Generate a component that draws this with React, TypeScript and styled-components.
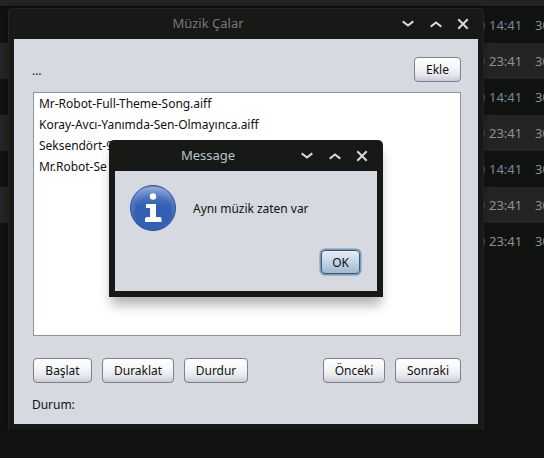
import React from "react";
import styled, { createGlobalStyle } from "styled-components";

const Global = createGlobalStyle`
  html, body { margin: 0; padding: 0; background: #111311; overflow: hidden; }
  #root { width: 544px; height: 458px; }
`;

const Desktop = styled.div`
  position: relative;
  width: 544px;
  height: 458px;
  overflow: hidden;
  background: #111311;
  font-family: "Noto Sans", "Open Sans", sans-serif;
  font-size: 12px;
  letter-spacing: -0.03px;
`;

const TopStrip = styled.div`
  height: 7px;
  background: #242424;
  border-bottom: 1px solid #0c0d0c;
  box-sizing: border-box;
`;

const Row = styled.div<{ $alt: boolean }>`
  height: 36px;
  background: ${(p) => (p.$alt ? "#242424" : "#111311")};
  display: flex;
  align-items: center;
  padding-left: 482px;
  box-sizing: border-box;
  gap: 4px;
  white-space: nowrap;
`;

const Dot = styled.span`
  width: 3px;
  height: 9px;
  border-radius: 0 5px 5px 0;
  background: #7a4a1c;
  flex: none;
`;

const Time = styled.span<{ $tone: string }>`
  color: ${(p) => p.$tone};
  font-size: 13px;
  letter-spacing: 0;
  width: 31px;
  flex: none;
`;

const Extra = styled.span`
  color: #8f9092;
  font-size: 13px;
  margin-left: 11px;
`;

const Frame = styled.div`
  position: absolute;
  left: 8px;
  top: 8px;
  width: 476px;
  height: 422px;
  box-sizing: border-box;
  background: #171917;
  border: 1px solid #232523;
  border-bottom: none;
  border-radius: 4px 4px 0 0;
  padding: 0 5px 6px;
  display: flex;
  flex-direction: column;
  box-shadow: 0 0 6px rgba(0, 0, 0, 0.35);
`;

const TitleBar = styled.div<{ $h: number }>`
  height: ${(p) => p.$h}px;
  flex: none;
  display: flex;
  align-items: center;
  margin: 0 -5px;
`;

const TitleText = styled.div<{ $color: string }>`
  flex: 1;
  text-align: center;
  color: ${(p) => p.$color};
  font-size: 13px;
  letter-spacing: 0;
  padding: 0 0 2px 7px;
`;

const Controls = styled.div`
  flex: none;
  display: flex;
  gap: 11.5px;
  padding-right: 12px;
`;

const ControlIcon = styled.svg`
  width: 16px;
  height: 16px;
  flex: none;
  fill: none;
  stroke: #d8dadb;
  stroke-width: 2;
  stroke-linecap: square;
  stroke-linejoin: miter;
`;

const Panel = styled.div`
  flex: 1;
  background: #d6d9df;
  padding: 18px 17px 0 19px;
  display: flex;
  flex-direction: column;
  color: #111;
  min-height: 0;
`;

const TopLine = styled.div`
  display: flex;
  justify-content: space-between;
  align-items: flex-end;
  height: 25px;
`;

const Dots = styled.span`
  margin-left: -1px;
  line-height: 16px;
  position: relative;
  top: -3px;
`;

const Btn = styled.button<{ $w: number }>`
  width: ${(p) => p.$w}px;
  height: 25px;
  box-sizing: border-box;
  padding: 0;
  font: inherit;
  letter-spacing: inherit;
  color: #111;
  border: 1px solid #7c8088;
  border-radius: 4px;
  background: linear-gradient(#ffffff 0%, #f4f5f8 45%, #e3e6ec 75%, #c6cad2 100%);
  flex: none;
`;

const List = styled.div`
  margin-top: 10px;
  height: 244px;
  box-sizing: border-box;
  background: #fff;
  border: 1px solid #8f939c;
  padding: 0 5px;
  display: flex;
  flex-direction: column;
  flex: none;
`;

const ListItem = styled.div`
  height: 21px;
  line-height: 21px;
  color: #111;
  white-space: nowrap;
`;

const ButtonRow = styled.div`
  margin-top: 22px;
  display: flex;
  gap: 10px;
`;

const Spacer = styled.div`
  flex: 1;
`;

const Status = styled.div`
  margin: 13px 0 0 -1px;
  line-height: 18px;
`;

const Dialog = styled.div`
  position: absolute;
  left: 109px;
  top: 140px;
  width: 274px;
  height: 157px;
  box-sizing: border-box;
  background: #171917;
  border-radius: 5px 5px 0 0;
  padding: 0 6px 6px;
  display: flex;
  flex-direction: column;
  box-shadow: 0 10px 12px -2px rgba(0, 0, 0, 0.3);
`;

const DialogBody = styled.div`
  flex: 1;
  background: #d6d9df;
  display: flex;
  flex-direction: column;
  padding: 14px 17px 0 15px;
`;

const MessageRow = styled.div`
  display: flex;
  align-items: center;
  gap: 17px;
  height: 46px;
  color: #111;
`;

const DialogActions = styled.div`
  margin-top: 19px;
  display: flex;
  justify-content: flex-end;
`;

const OkBtn = styled.button`
  width: 39px;
  height: 24px;
  box-sizing: border-box;
  padding: 0;
  font: inherit;
  letter-spacing: inherit;
  color: #111;
  border: 1px solid #4b5563;
  border-radius: 4px;
  background: linear-gradient(#e6edf4 0%, #c4d5e6 50%, #9fb9d2 100%);
  box-shadow: 0 0 0 1.5px #6f9ac4;
`;

const Chevron = ({ up }: { up?: boolean }) => (
  <ControlIcon viewBox="0 0 16 16">
    <path d={up ? "M3.5 10 L8 6.5 L12.5 10" : "M3.5 6 L8 9.5 L12.5 6"} />
  </ControlIcon>
);
const Close = () => (
  <ControlIcon viewBox="0 0 16 16">
    <path d="M4 4 L12 12 M12 4 L4 12" />
  </ControlIcon>
);

const InfoIcon = () => (
  <svg width="46" height="46" viewBox="0 0 46 46">
    <defs>
      <radialGradient id="ball" cx="50%" cy="62%" r="60%">
        <stop offset="0%" stopColor="#2f5db5" />
        <stop offset="65%" stopColor="#3560b4" />
        <stop offset="100%" stopColor="#6d90cf" />
      </radialGradient>
      <linearGradient id="shine" x1="0" y1="0" x2="0" y2="1">
        <stop offset="0%" stopColor="#9db7e2" stopOpacity="0.8" />
        <stop offset="100%" stopColor="#3d68ba" stopOpacity="0" />
      </linearGradient>
    </defs>
    <circle cx="23" cy="23" r="22.5" fill="url(#ball)" stroke="#2b4d94" strokeWidth="1" />
    <ellipse cx="23" cy="13" rx="18" ry="11" fill="url(#shine)" />
    <circle cx="23" cy="11.5" r="3.2" fill="#fff" />
    <path d="M16 19 H26 V32 H30 Q31.5 32 31.5 34 V37 H15 V34 Q15 32 17 32 H20 V23 H16 Z" fill="#fff" />
  </svg>
);

const rows = [
  { t: "14:41", tone: "#76899b" },
  { t: "23:41", tone: "#8f9092" },
  { t: "14:41", tone: "#76899b" },
  { t: "23:41", tone: "#8f9092" },
  { t: "14:41", tone: "#76899b" },
  { t: "23:41", tone: "#8f9092" },
  { t: "23:41", tone: "#8f9092" },
];

export default function App() {
  return (
    <Desktop>
      <Global />
      <TopStrip />
      {rows.map((r, i) => (
        <Row key={i} $alt={i % 2 === 1}>
          <Dot />
          <Time $tone={r.tone}>{r.t}</Time>
          <Extra>30</Extra>
        </Row>
      ))}
      <Frame>
        <TitleBar $h={30}>
          <TitleText $color="#787878">Müzik Çalar</TitleText>
          <Controls>
            <Chevron />
            <Chevron up />
            <Close />
          </Controls>
        </TitleBar>
        <Panel>
          <TopLine>
            <Dots>...</Dots>
            <Btn $w={47}>Ekle</Btn>
          </TopLine>
          <List>
            <ListItem>Mr-Robot-Full-Theme-Song.aiff</ListItem>
            <ListItem>Koray-Avcı-Yanımda-Sen-Olmayınca.aiff</ListItem>
            <ListItem>Seksendört-99</ListItem>
            <ListItem>Mr.Robot-Se</ListItem>
          </List>
          <ButtonRow>
            <Btn $w={59}>Başlat</Btn>
            <Btn $w={72}>Duraklat</Btn>
            <Btn $w={64}>Durdur</Btn>
            <Spacer />
            <Btn $w={62}>Önceki</Btn>
            <Btn $w={66}>Sonraki</Btn>
          </ButtonRow>
          <Status>Durum:</Status>
        </Panel>
      </Frame>
      <Dialog>
        <TitleBar $h={31}>
          <TitleText $color="#b9c6cf">Message</TitleText>
          <Controls>
            <Chevron />
            <Chevron up />
            <Close />
          </Controls>
        </TitleBar>
        <DialogBody>
          <MessageRow>
            <InfoIcon />
            <span>Aynı müzik zaten var</span>
          </MessageRow>
          <DialogActions>
            <OkBtn>OK</OkBtn>
          </DialogActions>
        </DialogBody>
      </Dialog>
    </Desktop>
  );
}
